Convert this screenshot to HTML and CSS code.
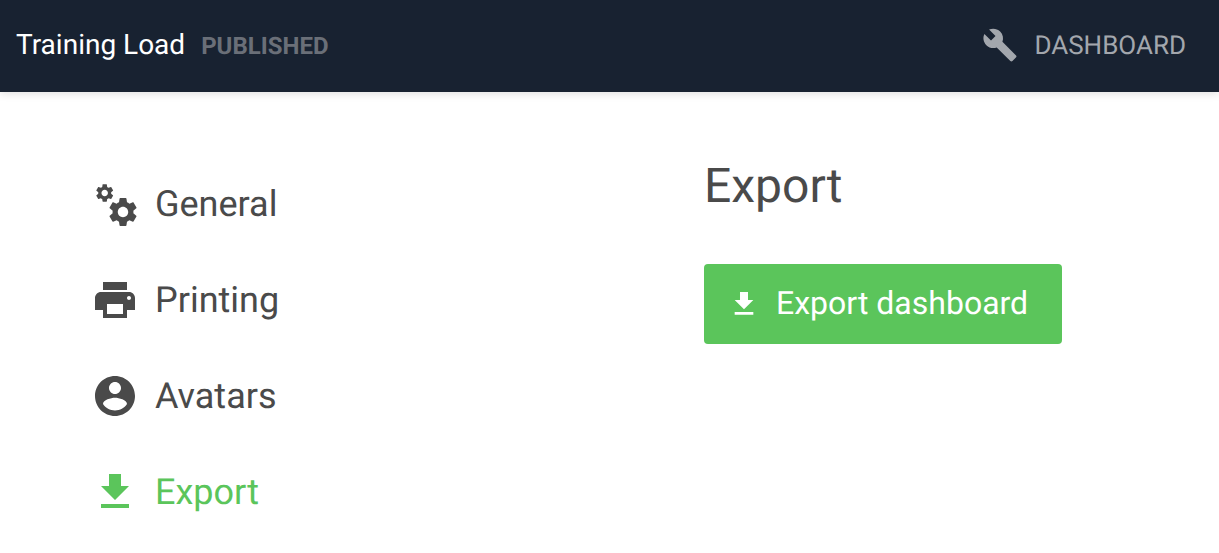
FILE: index.html
```
<!DOCTYPE html>
<html lang="en">
<head>
<meta charset="utf-8">
<title>Training Load</title>
<link rel="stylesheet" href="styles.css">
</head>
<body>
<header class="topbar">
  <div class="topbar-title">
    <span class="dash-name">Training Load</span>
    <span class="dash-status">PUBLISHED</span>
  </div>
  <a class="topbar-link">
    <svg class="icon-wrench" viewBox="0 0 24 24"><path d="M22.7 19l-9.1-9.1c.9-2.3.4-5-1.5-6.9-2-2-5-2.4-7.4-1.3L9 6 6 9 1.6 4.7C.4 7.1.9 10.1 2.9 12.1c1.9 1.9 4.6 2.4 6.9 1.5l9.1 9.1c.4.4 1 .4 1.4 0l2.3-2.3c.5-.4.5-1.1.1-1.4z"/></svg>
    <span class="topbar-link-label">DASHBOARD</span>
  </a>
</header>
<main class="layout">
  <nav class="side-nav">
    <a class="nav-item">
      <svg class="icon-nav" viewBox="0 0 48 48"><defs><path id="gear" d="M19.14 12.94c.04-.3.06-.61.06-.94 0-.32-.02-.64-.07-.94l2.03-1.58c.18-.14.23-.41.12-.61l-1.92-3.32c-.12-.22-.37-.29-.59-.22l-2.39.96c-.5-.38-1.03-.7-1.62-.94l-.36-2.54c-.04-.24-.24-.41-.48-.41h-3.84c-.24 0-.43.17-.47.41l-.36 2.54c-.59.24-1.13.57-1.62.94l-2.39-.96c-.22-.08-.47 0-.59.22L2.74 8.87c-.12.21-.08.47.12.61l2.03 1.58c-.05.3-.09.63-.09.94s.02.64.07.94l-2.03 1.58c-.18.14-.23.41-.12.61l1.92 3.32c.12.22.37.29.59.22l2.39-.96c.5.38 1.03.7 1.62.94l.36 2.54c.05.24.24.41.48.41h3.84c.24 0 .44-.17.47-.41l.36-2.54c.59-.24 1.13-.56 1.62-.94l2.39.96c.22.08.47 0 .59-.22l1.92-3.32c.12-.22.07-.47-.12-.61l-2.01-1.58zM12 15.6c-1.98 0-3.6-1.62-3.6-3.6s1.62-3.6 3.6-3.6 3.6 1.62 3.6 3.6-1.62 3.6-3.6 3.6z"/></defs><use href="#gear" transform="translate(2.9 2.2) scale(.9)"/><use href="#gear" transform="translate(14.6 14.6) scale(1.45)"/></svg>
      <span>General</span>
    </a>
    <a class="nav-item">
      <svg class="icon-nav" viewBox="0 0 24 24"><path d="M19 8H5c-1.66 0-3 1.34-3 3v6h4v4h12v-4h4v-6c0-1.66-1.34-3-3-3zm-3 11H8v-5h8v5zm3-7c-.55 0-1-.45-1-1s.45-1 1-1 1 .45 1 1-.45 1-1 1zm-1-9H6v4h12V3z"/></svg>
      <span>Printing</span>
    </a>
    <a class="nav-item">
      <svg class="icon-nav" viewBox="0 0 24 24"><path d="M12 2C6.48 2 2 6.48 2 12s4.48 10 10 10 10-4.48 10-10S17.52 2 12 2zm0 3c1.66 0 3 1.34 3 3s-1.34 3-3 3-3-1.34-3-3 1.34-3 3-3zm0 14.2c-2.5 0-4.71-1.28-6-3.22.03-1.99 4-3.08 6-3.08 1.99 0 5.97 1.09 6 3.08-1.29 1.94-3.5 3.22-6 3.22z"/></svg>
      <span>Avatars</span>
    </a>
    <a class="nav-item is-active">
      <svg class="icon-nav" viewBox="0 0 24 24"><path d="M19 9h-4V3H9v6H5l7 7 7-7zM5 18v2h14v-2H5z"/></svg>
      <span>Export</span>
    </a>
  </nav>
  <section class="panel">
    <h1 class="panel-title">Export</h1>
    <button class="btn-primary" type="button">
      <svg class="icon-btn" viewBox="0 0 24 24"><path d="M19 9h-4V3H9v6H5l7 7 7-7zM5 18v2h14v-2H5z"/></svg>
      <span class="btn-label">Export dashboard</span>
    </button>
  </section>
</main>
</body>
</html>
```
FILE: styles.css
```
* { box-sizing: border-box; }

html, body {
  margin: 0;
  padding: 0;
  height: 100%;
  overflow: hidden;
  background: #fff;
}

body {
  font-family: Roboto, "Liberation Sans", sans-serif;
  color: #4a4a4a;
  text-rendering: geometricPrecision;
}

.topbar {
  display: flex;
  align-items: center;
  justify-content: space-between;
  height: 92px;
  padding: 0 33px 3px 16px;
  background: #182231;
  box-shadow: 0 2px 8px rgba(0, 0, 0, 0.12);
}

.topbar-title {
  display: flex;
  align-items: baseline;
  gap: 16px;
}

.dash-name {
  font-size: 28px;
  color: #fff;
}

.dash-status {
  font-size: 24px;
  font-weight: 700;
  color: #6a6f78;
}

.topbar-link {
  display: flex;
  align-items: center;
  gap: 16px;
  font-size: 26px;
  color: #a3a7ad;
}

.topbar-link-label {
  padding-top: 2px;
}

.icon-wrench {
  width: 36px;
  height: 36px;
  fill: currentColor;
}

.layout {
  display: flex;
  padding-top: 88px;
}

.side-nav {
  display: flex;
  flex-direction: column;
  gap: 48px;
  width: 704px;
  padding-left: 91px;
}

.nav-item {
  display: flex;
  align-items: center;
  gap: 16px;
  height: 48px;
  font-size: 36px;
  color: #4a4a4a;
}

.nav-item.is-active {
  color: #5bc55b;
}

.icon-nav {
  width: 48px;
  height: 48px;
  flex: none;
  fill: currentColor;
}

.panel {
  margin-top: -24px;
}

.panel-title {
  margin: 0 0 48px;
  font-size: 48px;
  font-weight: 400;
  line-height: 60px;
  color: #4a4a4a;
}

.btn-primary {
  display: flex;
  align-items: center;
  gap: 16px;
  width: 358px;
  height: 80px;
  padding: 0 24px;
  border: 0;
  border-radius: 4px;
  background: #5bc55b;
  color: #fff;
  font-family: inherit;
  font-size: 32px;
  text-rendering: inherit;
  white-space: nowrap;
}

.btn-label {
  margin-top: -2px;
}

.icon-btn {
  width: 32px;
  height: 32px;
  flex: none;
  fill: currentColor;
}
```
